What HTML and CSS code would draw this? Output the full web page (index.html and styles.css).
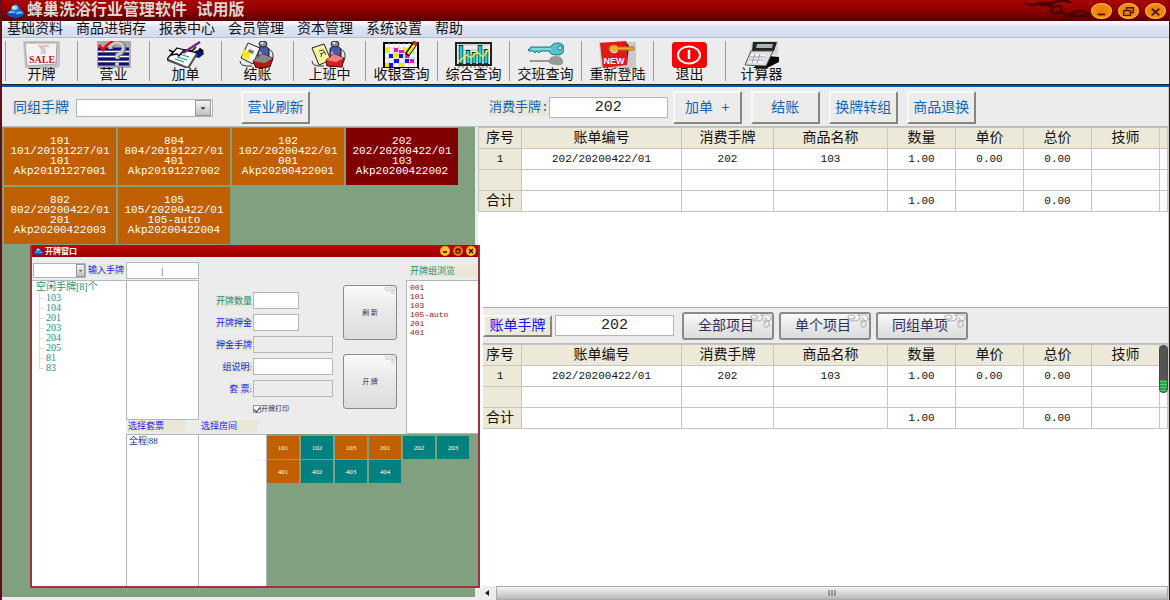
FILE: index.html
```html
<!DOCTYPE html>
<html lang="zh-CN">
<head>
<meta charset="utf-8">
<title>蜂巢洗浴行业管理软件</title>
<link rel="stylesheet" href="styles.css">
</head>
<body>
<svg class="defs" width="0" height="0" aria-hidden="true">
  <symbol id="logo" viewBox="0 0 18 14">
    <path d="M4 6q1-6 5-6t5 6q4 1 4 4-2 4-9 4T0 10q1-3 4-4" fill="#1c78e4"/>
    <path d="M0 10q4-3 8-1t10 1q-2 4-9 4T0 10" fill="#0c50c8"/>
    <path d="M2 9q3-2 6 0M10 10q3-2 6-1" stroke="#7fd4ff" stroke-width="1.500" fill="none"/>
    <ellipse cx="8" cy="3.500" rx="3" ry="2.200" fill="#a4e4ff"/>
  </symbol>
  <symbol id="swirl" viewBox="0 0 22 14">
    <path d="M1 3q0-2 3-2t4 2q0 2-2 2T4 4M1 3q1 4 6 4t6-3q0-3-3-3M10 1h8q3 0 3 3t-3 2.500-2-3M13 7q5-1 6 2t-2 4-3-3 2-1" fill="none" stroke="#b8b8b8" stroke-width="1.200"/>
  </symbol>
  <symbol id="people" viewBox="0 0 37 27">
    <path d="M1 20q0 6 12 5M27 7q8 2 7 9t-5 8" fill="none" stroke="#333" stroke-width="1"/>
    <path d="M19 8q1-3 5-3t6 3v9H19z" fill="#4c58a8" stroke="#112" stroke-width="1"/>
    <path d="M20 10l3 2v5h-3z" fill="#9ca8dc"/>
    <ellipse cx="24" cy="3" rx="4" ry="3" fill="#848ca0" stroke="#222"/>
    <ellipse cx="23" cy="2" rx="1.500" ry="1" fill="#eee"/>
  </symbol>
</svg>
<div class="app">
  <header class="titlebar">
    <svg class="titlebar-logo"><use href="#logo"/></svg>
    <h1 class="titlebar-text">蜂巢洗浴行业管理软件 试用版</h1>
    <svg class="titlebar-cloud" viewBox="0 0 80 21" aria-hidden="true"><path d="M14 3q8 4 14 0h14q-5 10 3 10 7 0 5-6-4-3-6 1M42 3q10-5 18 0M28 5q10-1 16 3M50 12q8 6 14 0 6-4 16 4M52 19q12-6 28-2" fill="none" stroke="#4a0000" stroke-width="2.500"/></svg>
    <div class="window-buttons">
      <button class="round-button" aria-label="最小化"><svg viewBox="0 0 20 16"><path d="M6 11h8" stroke="#4c1800" stroke-width="2"/></svg></button>
      <button class="round-button" aria-label="还原"><svg viewBox="0 0 20 16"><path d="M8 7V4h7v5h-3M5 7h7v5H5z" fill="none" stroke="#4c1800" stroke-width="1.500"/></svg></button>
      <button class="round-button" aria-label="关闭"><svg viewBox="0 0 20 16"><path d="M6 5l8 7M14 5l-8 7" stroke="#4c1800" stroke-width="2"/></svg></button>
    </div>
  </header>
  <nav class="menu">
    <a href="#">基础资料</a><a href="#">商品进销存</a><a href="#">报表中心</a><a href="#">会员管理</a><a href="#">资本管理</a><a href="#">系统设置</a><a href="#">帮助</a>
  </nav>
  <div class="toolbar">
    <button class="tool"><svg viewBox="0 0 37 27"><path d="M0 0h37v25L34 27H2z" fill="#c4c4c4"/><path d="M2 2h32l-1 21-29 2z" fill="#f4f2f2" stroke="#a5a5a5"/><path d="M15 5h11M17 7h5" stroke="#d88"/><path d="M18 8h5v5h-5z" fill="#c8d4d8"/><text x="19" y="22" class="sale">SALE</text></svg>开牌</button>
    <button class="tool"><svg viewBox="0 0 37 27"><path d="M2 0h34v27H2z" fill="#aaa"/><path d="M3 8h31M3 13h31M3 18h31M3 23h31" stroke="#10107c" stroke-width="3"/><path d="M3 10.500h31M3 15.500h31M3 20.500h31" stroke="#fff" stroke-width="1"/><path d="M16 8q0-6 7-6t6 7q-1 3-6 5v4" fill="none" stroke="#777" stroke-width="4"/><path d="M15 8q0-6 7-6t6 6q-1 4-6 6v4M20 23h4" fill="none" stroke="#ccc" stroke-width="3"/><path d="M4 4l4 5Q12 3 18 0" fill="none" stroke="#f00" stroke-width="2.500"/></svg>营业</button>
    <button class="tool"><svg viewBox="0 0 37 27"><path d="M28 10l7-2 2 5-5 4-7-2z" fill="#001890"/><path d="M32 8l4 3" stroke="#000" stroke-width="3"/><path d="M10 7l20 5-9 15L0 18z" fill="#fff" stroke="#000" stroke-width="1.200"/><path d="M0 19l21 8 9-14" fill="none" stroke="#555" stroke-width="2"/><path d="M12 13l10 3M10 16l10 3M8 18l9 3" stroke="#089090"/><path d="M2 9l4 2-2 3 6-1 2 2 5-6 8 1 4-4" fill="none" stroke="#000" stroke-width="1.500"/><path d="M16 12L33 1" stroke="#802090" stroke-width="2.500"/></svg>加单</button>
    <button class="tool"><svg viewBox="0 0 37 27"><use href="#people"/><path d="M9 2l12 5-7 16L2 17z" fill="#f4f4e8" stroke="#222"/><path d="M4 8l8 4-3 7-6-3z" fill="#f5e820"/><path d="M10 8l5 2-1 3-5-2z" fill="#777"/><path d="M14 20l9-7 11 4-3 9-14 1z" fill="#b81818" stroke="#311"/><path d="M14 20l9-7 11 4-8 5z" fill="#888"/></svg>结账</button>
    <button class="tool"><svg viewBox="0 0 37 27"><use href="#people"/><path d="M1 7l12-4 7 16-12 5z" fill="#faf6a0" stroke="#222"/><path d="M8 10l5-1M9 13l5-2M11 12l-1 4M13 10l2 4" stroke="#444"/><path d="M15 19l8-6 10 4-2 9-15-1z" fill="#d82020" stroke="#400"/><path d="M15 19l8-6 10 4-8 4z" fill="#f08080"/></svg>上班中</button>
    <button class="tool"><svg viewBox="0 0 37 27"><path d="M1 2h34v25H1z" fill="#fff" stroke="#000" stroke-width="2"/><path d="M6 2v24M11 2v24M16 2v24M21 2v24M26 2v24M31 2v24M2 7h32M2 12h32M2 17h32M2 22h32" stroke="#ccc"/><path d="M2 7h4v4H2zM11 12h5v4h-5zM2 22h4v4H2zM21 7h4v4h-4zM16 22h5v4h-5z" fill="#ffe000"/><path d="M6 13h4v4H6zM11 18h5v4h-5zM6 22h4v4H6zM16 13h4v4h-4zM22 18h4v4h-4z" fill="#1010f0"/><path d="M11 7h4v4h-4zM16 9h5v3h-5zM22 13h4v4h-4zM27 18h4v4h-4z" fill="#f010c0"/><path d="M24 14l9-13" stroke="#000" stroke-width="5"/><path d="M25 13l7-10" stroke="#f8e800" stroke-width="3"/><path d="M31 4l2-3" stroke="#e02020" stroke-width="4"/></svg>收银查询</button>
    <button class="tool"><svg viewBox="0 0 37 27"><path d="M1 2h35v22H1z" fill="#eee" stroke="#222" stroke-width="2"/><path d="M3 4h31M3 9h31M3 14h31" stroke="#bbb"/><path d="M6 4v19M13 9v14M19 11v12M25 4v19M31 8v15" stroke="#033" stroke-width="4.500"/><path d="M6 5v17M13 10v12M19 12v10M25 5v17M31 9v13" stroke="#20d0d0" stroke-width="3"/><path d="M3 21l9-7 4 3 6-6 6 5 6-8" fill="none" stroke="#f5e820" stroke-width="1.500"/><path d="M3 26h31" stroke="#666" stroke-dasharray="2 2"/></svg>综合查询</button>
    <button class="tool"><svg viewBox="0 0 37 27"><path d="M2 19h20q1-4 7-4t7 5-7 4-7-3H3z" fill="#999"/><path d="M1 9l3-3h20q1-4 7-4t6 6-7 6-8-4h-8l-2 2-2-2-2 2-2-2H2z" fill="#54c4cc" stroke="#187880"/><path d="M5 8h19" stroke="#b0f0f0"/><ellipse cx="33" cy="7" rx="2" ry="2" fill="#eee" stroke="#187880"/></svg>交班查询</button>
    <button class="tool"><svg viewBox="0 0 37 27"><path d="M0 1h37v26H2z" fill="#c9c9c9"/><path d="M1 2l26-2 1 24-24 3z" fill="#e01818"/><path d="M27 1l3 4-2 19z" fill="#8c0808"/><path d="M10 8q0-4 5-4 3 0 4 2h16v3H19q-1 3-5 3-3 0-4-4" fill="#f0a838" stroke="#b87010"/><path d="M11 9q4 5 8 1" stroke="#fff" fill="none"/><text x="15" y="23" class="new">NEW</text></svg>重新登陆</button>
    <button class="tool"><svg viewBox="0 0 37 27"><rect x="1" y="1" width="35" height="26" rx="4" fill="#c02010"/><rect x="1" y="1" width="33" height="25" rx="4" fill="#fa0000"/><ellipse cx="18" cy="14" rx="11" ry="8.500" fill="none" stroke="#fff" stroke-width="2"/><path d="M18 9v9" stroke="#fff" stroke-width="2.500"/></svg>退出</button>
    <button class="tool"><svg viewBox="0 0 37 27"><path d="M9 0h26v14H6z" fill="#d4d4d4"/><path d="M10 1h24l-3 9H9z" fill="#222"/><path d="M14 3h16l-1 4H13z" fill="#a5b4bc"/><path d="M25 15l11 1v5l-12 6H10z" fill="#080808"/><path d="M8 10h22l-7 15-21-1z" fill="#dce0e4" stroke="#555"/><path d="M8 13h15l-4 9H5z" fill="#f4f4ff"/><path d="M7 16h15M6 19h14M12 13l-3 9M17 13l-3 9" stroke="#99a"/></svg>计算器</button>
  </div>
  <main class="workspace">
    <section class="cards-pane">
      <div class="bar">
        <label class="tag" for="group">同组手牌</label>
        <span class="combo"><select id="group"><option></option></select><svg viewBox="0 0 16 16" aria-hidden="true"><path d="M5 7h6l-3 3z" fill="#333"/></svg></span>
        <button class="key key-refresh">营业刷新</button>
      </div>
      <div class="cards">
        <button class="card">101<br>101/20191227/01<br>101<br>Akp20191227001</button>
        <button class="card">804<br>804/20191227/01<br>401<br>Akp20191227002</button>
        <button class="card">102<br>102/20200422/01<br>001<br>Akp20200422001</button>
        <button class="card card-active">202<br>202/20200422/01<br>103<br>Akp20200422002</button>
        <button class="card">802<br>802/20200422/01<br>201<br>Akp20200422003</button>
        <button class="card">105<br>105/20200422/01<br>105-auto<br>Akp20200422004</button>
      </div>
    </section>
    <section class="bills-pane">
      <div class="bill bill-top">
        <div class="bar">
          <label class="tag tag-consume" for="consume">消费手牌:</label>
          <input class="field" id="consume" value="202">
          <div class="keys">
            <button class="key">加单 +</button><button class="key">结账</button><button class="key">换牌转组</button><button class="key">商品退换</button>
          </div>
        </div>
        <table class="grid">
          <colgroup><col class="c-no"><col class="c-bill"><col class="c-hand"><col class="c-name"><col class="c-num"><col class="c-num"><col class="c-num"><col class="c-num"><col></colgroup>
          <thead><tr><th>序号</th><th>账单编号</th><th>消费手牌</th><th>商品名称</th><th>数量</th><th>单价</th><th>总价</th><th>技师</th><th></th></tr></thead>
          <tbody>
            <tr><th>1</th><td>202/20200422/01</td><td>202</td><td>103</td><td>1.00</td><td>0.00</td><td>0.00</td><td></td><td></td></tr>
            <tr><th></th><td></td><td></td><td></td><td></td><td></td><td></td><td></td><td></td></tr>
            <tr><th>合计</th><td></td><td></td><td></td><td>1.00</td><td></td><td>0.00</td><td></td><td></td></tr>
          </tbody>
        </table>
      </div>
      <div class="bill bill-bottom">
        <div class="bar bar-bottom">
          <button class="key key-bill">账单手牌</button>
          <input class="field" aria-label="账单手牌" value="202">
          <div class="fancies">
            <button class="fancy">全部项目<svg><use href="#swirl"/></svg></button>
            <button class="fancy">单个项目<svg><use href="#swirl"/></svg></button>
            <button class="fancy">同组单项<svg><use href="#swirl"/></svg></button>
          </div>
        </div>
        <table class="grid">
          <colgroup><col class="c-no"><col class="c-bill"><col class="c-hand"><col class="c-name"><col class="c-num"><col class="c-num"><col class="c-num"><col class="c-num"><col></colgroup>
          <thead><tr><th>序号</th><th>账单编号</th><th>消费手牌</th><th>商品名称</th><th>数量</th><th>单价</th><th>总价</th><th>技师</th><th></th></tr></thead>
          <tbody>
            <tr><th>1</th><td>202/20200422/01</td><td>202</td><td>103</td><td>1.00</td><td>0.00</td><td>0.00</td><td></td><td></td></tr>
            <tr><th></th><td></td><td></td><td></td><td></td><td></td><td></td><td></td><td></td></tr>
            <tr><th>合计</th><td></td><td></td><td></td><td>1.00</td><td></td><td>0.00</td><td></td><td></td></tr>
          </tbody>
        </table>
        <div class="level"></div>
      </div>
      <div class="scroll">
        <button class="scroll-arrow" aria-label="向左"><svg viewBox="0 0 6 8"><path d="M5 1v6L1 4z" fill="#222"/></svg></button>
        <div class="scroll-thumb"><svg viewBox="0 0 9 6"><path d="M1 0v6M4 0v6M7 0v6" stroke="#555"/></svg></div>
      </div>
    </section>
  </main>

  <section class="dialog" role="dialog" aria-labelledby="dialog-title">
    <header class="dialog-title">
      <svg class="dialog-logo"><use href="#logo"/></svg>
      <h2 id="dialog-title">开牌窗口</h2>
      <div class="dialog-buttons">
        <button aria-label="最小化"><svg viewBox="0 0 10 10"><path d="M3 6h4" stroke="#400" stroke-width="1.500"/></svg></button>
        <button class="dim" aria-label="最大化"><svg viewBox="0 0 10 10"><path d="M3 3h4v4H3zM3 4h4" fill="none" stroke="#400"/></svg></button>
        <button aria-label="关闭"><svg viewBox="0 0 10 10"><path d="M3 3l4 4M7 3L3 7" stroke="#400" stroke-width="1.500"/></svg></button>
      </div>
    </header>
    <div class="dialog-body">
      <div class="tree-col">
        <div class="tree-top">
          <span class="combo combo-small"><select aria-label="类别"><option></option></select><svg viewBox="0 0 16 16" aria-hidden="true"><path d="M4 7h8l-4 4z" fill="#555"/></svg></span>
          <label class="small-tag" for="hand">输入手牌</label>
        </div>
        <div class="tree">
          空闲手牌[8]个
          <ul><li>103</li><li>104</li><li>201</li><li>203</li><li>204</li><li>205</li><li>81</li><li>83</li></ul>
        </div>
      </div>
      <div class="open-col">
        <div class="open-top">
          <div class="hand-col">
            <input class="hand-input" id="hand" value="|">
            <div class="hand-list"></div>
            <div class="caption"><span>选择套票</span></div>
          </div>
          <div class="form-col">
            <div class="form">
              <label class="green" for="f1">开牌数量</label><input id="f1" class="short">
              <label for="f2">开牌押金</label><input id="f2" class="short">
              <label for="f3">押金手牌</label><input id="f3" disabled>
              <label for="f4">组说明:</label><input id="f4">
              <label for="f5">套 票:</label><input id="f5" disabled>
            </div>
            <label class="print"><input type="checkbox" checked>开牌打印</label>
            <div class="caption"><span>选择房间</span></div>
          </div>
          <div class="action-col">
            <button class="fancy fancy-square">刷 新<svg><use href="#swirl"/></svg></button>
            <button class="fancy fancy-square">开 牌<svg><use href="#swirl"/></svg></button>
          </div>
          <div class="group-col">
            <div class="group-title"><span>开牌组浏览</span></div>
            <ul class="group-list"><li>001</li><li>101</li><li>103</li><li>105-auto</li><li>201</li><li>401</li></ul>
          </div>
        </div>
        <div class="open-bottom">
          <div class="ticket-list">全程|88</div>
          <div class="room-list"></div>
          <div class="rooms">
            <button class="busy">101</button><button>102</button><button class="busy">103</button><button class="busy">201</button><button>202</button><button>203</button>
            <button class="busy">401</button><button>402</button><button>403</button><button>404</button>
          </div>
        </div>
      </div>
    </div>
  </section>
</div>
</body>
</html>
```
FILE: styles.css
```css
* { box-sizing: border-box; }
body { margin: 0; background: #ececec; font: 14px/16px "Liberation Mono", "Noto Sans CJK SC", monospace; color: #111; }
button, input, select { font: inherit; color: inherit; margin: 0; padding: 0; border: 0; border-radius: 0; background: none; }
svg { display: block; }
ul { list-style: none; margin: 0; padding: 0; }
.defs { position: absolute; }

.app { position: relative; display: flex; flex-direction: column; min-height: 100vh; border: solid #5c1018; border-width: 0 1px 0 2px; }

.titlebar { display: flex; align-items: center; height: 21px; padding: 0 3px 0 5px; background: linear-gradient(#a80404, #940000 45%, #560000); }
.titlebar-logo { width: 17px; height: 14px; margin-right: 3px; }
.titlebar-text { flex: 1; margin: 0; font-size: 16px; line-height: 20px; font-weight: 700; color: #dcd6d0; }
.titlebar-cloud { width: 80px; height: 21px; }
.window-buttons { display: flex; gap: 6px; }
.round-button { width: 21px; height: 16px; border-radius: 50%; border: 1px solid #ffc460; background: radial-gradient(#f07c00, #f49410); }

.menu { display: flex; gap: 13px; padding: 0 5px; height: 17px; background: linear-gradient(#fff, #dce2f2 40%, #d4dcee); border-bottom: 1px solid #b4bccf; }
.menu a { color: #111; text-decoration: none; }

.toolbar { display: flex; padding: 3px 3px 0; height: 49px; background: #ececec; border-bottom: 2px solid #0058b4; box-shadow: inset 0 -1px #222; }
.tool { display: flex; flex-direction: column; align-items: center; width: 72px; height: 40px; line-height: 14px; border-left: 1px solid #999; white-space: nowrap; }
.tool svg { width: 37px; height: 27px; flex: none; }
.sale { font: 700 10px "Liberation Serif", serif; fill: #c01818; text-anchor: middle; }
.new { font: 700 9px "Liberation Sans", sans-serif; fill: #fff; text-anchor: middle; }

.workspace { flex: 1; display: grid; grid-template-columns: 476px 1fr; }
.bar { display: flex; align-items: center; height: 40px; padding: 2px 11px 0; background: #ececec; border-bottom: 1px solid #b8bcc8; color: #1464b8; }
.tag { background: #ebe7d6; white-space: nowrap; }
.tag-consume { font-size: 13px; }
.combo { position: relative; display: flex; width: 137px; height: 18px; margin: 0 28px 0 7px; }
.combo select { flex: 1; appearance: none; background: #fff; border: 1px solid #b0b4b8; }
.combo svg { position: absolute; right: 2px; top: 1px; width: 16px; height: 16px; background: linear-gradient(#f6f6f6, #c0c0c0); border: 1px solid #999; pointer-events: none; }
.key { width: 69px; height: 33px; background: #ececec; border: solid; border-width: 2px; border-color: #fbfaf2 #85857a #85857a #fbfaf2; white-space: nowrap; }
.cards-pane { display: flex; flex-direction: column; padding-bottom: 3px; }
.cards { flex: 1; display: grid; grid-template-columns: repeat(4, 112px); grid-auto-rows: 57px; gap: 2px; align-content: start; padding: 1px 2px; background: #80a080; border-right: 3px solid #e8ecf0; }
.card { background: #c06000; color: #fff; font-size: 11px; line-height: 10px; padding-bottom: 2px; }
.card-active { background: #800000; }

.bills-pane { display: flex; flex-direction: column; background: #fff; border-right: 1px solid #ccc; }
.bill { position: relative; }
.bill-top { flex: 1 1 220px; }
.bill-bottom { flex: 1 1 279px; }
.field { width: 119px; height: 21px; background: #fff; border: 1px solid #b0b8bc; text-align: center; font-size: 15px; color: #222; }
.keys { display: flex; gap: 9px; margin-left: 5px; }
.grid { width: 100%; table-layout: fixed; border-collapse: collapse; font-size: 11px; }
.grid th, .grid td { height: 21px; padding: 0; border: 1px solid #c4c4c4; text-align: center; line-height: 16px; }
.grid th { background: #ece9d8; font-weight: 400; }
.grid thead th, .grid tr:last-child th { font-size: 14px; }
.c-no { width: 43px; }
.c-bill { width: 160px; }
.c-hand { width: 92px; }
.c-name { width: 114px; }
.c-num { width: 68px; }
.bar-bottom { height: 37px; padding: 0 5px; border-top: 1px solid #b0b0b0; }
.key-bill { height: 22px; margin-right: 3px; background: #ece9d8; color: #1010f0; }
.fancies { display: flex; gap: 5px; margin-left: 8px; }
.fancy { position: relative; width: 92px; height: 28px; padding-right: 4px; border: 2px solid #8a8a8a; border-radius: 3px; background: linear-gradient(#fafafa, #e8e8e8 50%, #dcdcdc); color: #303060; }
.fancy svg { position: absolute; top: 0; right: 0; width: 22px; height: 14px; }
.level { position: absolute; top: 38px; right: 0; width: 9px; height: 48px; border-radius: 4px; border: 1px solid #484848; background: linear-gradient(#555 34px, transparent 34px), repeating-linear-gradient(#2ca04c 0 2px, #50d074 2px 3px); }
.scroll { display: flex; height: 14px; background: #ececec; }
.scroll-arrow { width: 18px; padding-left: 6px; }
.scroll-arrow svg { width: 6px; height: 8px; }
.scroll-thumb { flex: 1; display: grid; place-items: center; border: 1px solid #aaa; background: linear-gradient(#f4f4f4, #b8babc); }
.scroll-thumb svg { width: 9px; height: 6px; }

.dialog { position: absolute; left: 28px; top: 245px; bottom: 12px; width: 450px; display: flex; flex-direction: column; border: solid #9c3440; border-width: 0 2px 2px; background: #ececec; box-shadow: 3px 0 #fff; font: 9px/12px "Liberation Serif", "Noto Sans CJK SC", serif; color: #1c1cf0; }
.dialog-title { display: flex; align-items: center; gap: 2px; height: 12px; padding: 0 2px; background: linear-gradient(#c00808, #980000); }
.dialog-title h2 { flex: 1; margin: 0; font-size: 8px; line-height: 11px; color: #fff; }
.dialog-logo { width: 9px; height: 9px; }
.dialog-buttons { display: flex; gap: 3px; }
.dialog-buttons button { width: 10px; height: 10px; border-radius: 50%; background: #ffc020; }
.dialog-buttons .dim { background: #e87810; }
.dialog-body { flex: 1; display: grid; grid-template-columns: 94px 1fr; }
.tree-col, .open-col { display: flex; flex-direction: column; }
.tree-top { display: flex; align-items: center; height: 23px; padding: 3px 1px 0; }
.combo-small { width: 53px; height: 15px; margin: 0 2px 0 0; }
.combo-small svg { width: 9px; height: 13px; right: 1px; }
.small-tag, .form label, .caption span, .group-title span { background: #ebe7d6; white-space: nowrap; }
.tree { flex: 1; padding: 0 4px; background: #fff; border-top: 1px solid #b0bcc4; color: #209080; font-size: 10px; white-space: nowrap; }
.tree ul { position: relative; margin-left: 3px; padding-left: 7px; display: grid; grid-auto-rows: 10px; line-height: 10px; }
.tree ul::before { content: ""; position: absolute; left: 0; top: 0; bottom: 5px; border-left: 1px solid #ddd; }
.tree li { position: relative; }
.tree li::before { content: ""; position: absolute; left: -7px; top: 5px; width: 5px; border-top: 1px solid #ddd; }
.open-top { display: flex; height: 177px; }
.hand-col { display: flex; flex-direction: column; width: 73px; padding-top: 5px; }
.hand-input { width: 73px; height: 17px; background: #fff; border: 1px solid #b0b8bc; text-align: center; color: #222; }
.hand-list { flex: 1; margin-top: 1px; background: #fff; border: 1px solid #b0b8bc; }
.caption { height: 14px; padding-left: 2px; }
.caption span { display: inline-block; width: 57px; }
.form-col { display: flex; flex-direction: column; flex: 1; padding-top: 35px; }
.form { display: grid; grid-template-columns: 54px 80px; row-gap: 5px; align-items: center; }
.form label { justify-self: end; margin-right: 1px; }
.form .green { color: #209080; }
.form input { height: 17px; background: #fff; border: 1px solid #b0b8bc; }
.form input:disabled { background: #ececec; }
.form .short { width: 46px; }
.print { display: flex; align-items: center; flex: 1; padding-left: 54px; font-size: 7px; color: #303060; }
.print input { appearance: none; width: 8px; height: 8px; border: 1px solid #8098b0; background: #fff; display: grid; place-items: center; }
.print input:checked::before { content: ""; width: 3px; height: 5px; border: solid #224; border-width: 0 1px 1px 0; transform: rotate(40deg); }
.action-col { display: flex; flex-direction: column; gap: 14px; padding: 28px 9px 0 0; }
.fancy-square { width: 54px; height: 55px; padding: 0; border-width: 1px; font-size: 7px; }
.fancy-square svg { width: 12px; height: 9px; }
.group-col { display: flex; flex-direction: column; width: 72px; }
.group-title { height: 23px; padding: 8px 0 0 4px; color: #209080; }
.group-title span { display: block; }
.group-list { flex: 1; padding: 2px 3px; background: #fff; border: solid #b0b8bc; border-width: 1px 0 1px 1px; color: #981820; font: 8px/9px "Liberation Mono", monospace; }
.open-bottom { flex: 1; display: grid; grid-template-columns: 73px 68px 1fr; }
.ticket-list, .room-list { background: #fff; border: solid #b0b8bc; border-width: 1px 1px 0; }
.ticket-list { padding-left: 2px; color: #283088; }
.room-list { border-left: 0; }
.rooms { display: grid; grid-template-columns: repeat(6, 32px); grid-auto-rows: 23px; gap: 1px 2px; align-content: start; padding-top: 2px; background: #80a080; }
.rooms button { background: #008080; color: #fff; font-size: 7px; }
.rooms .busy { background: #c06000; }
```
